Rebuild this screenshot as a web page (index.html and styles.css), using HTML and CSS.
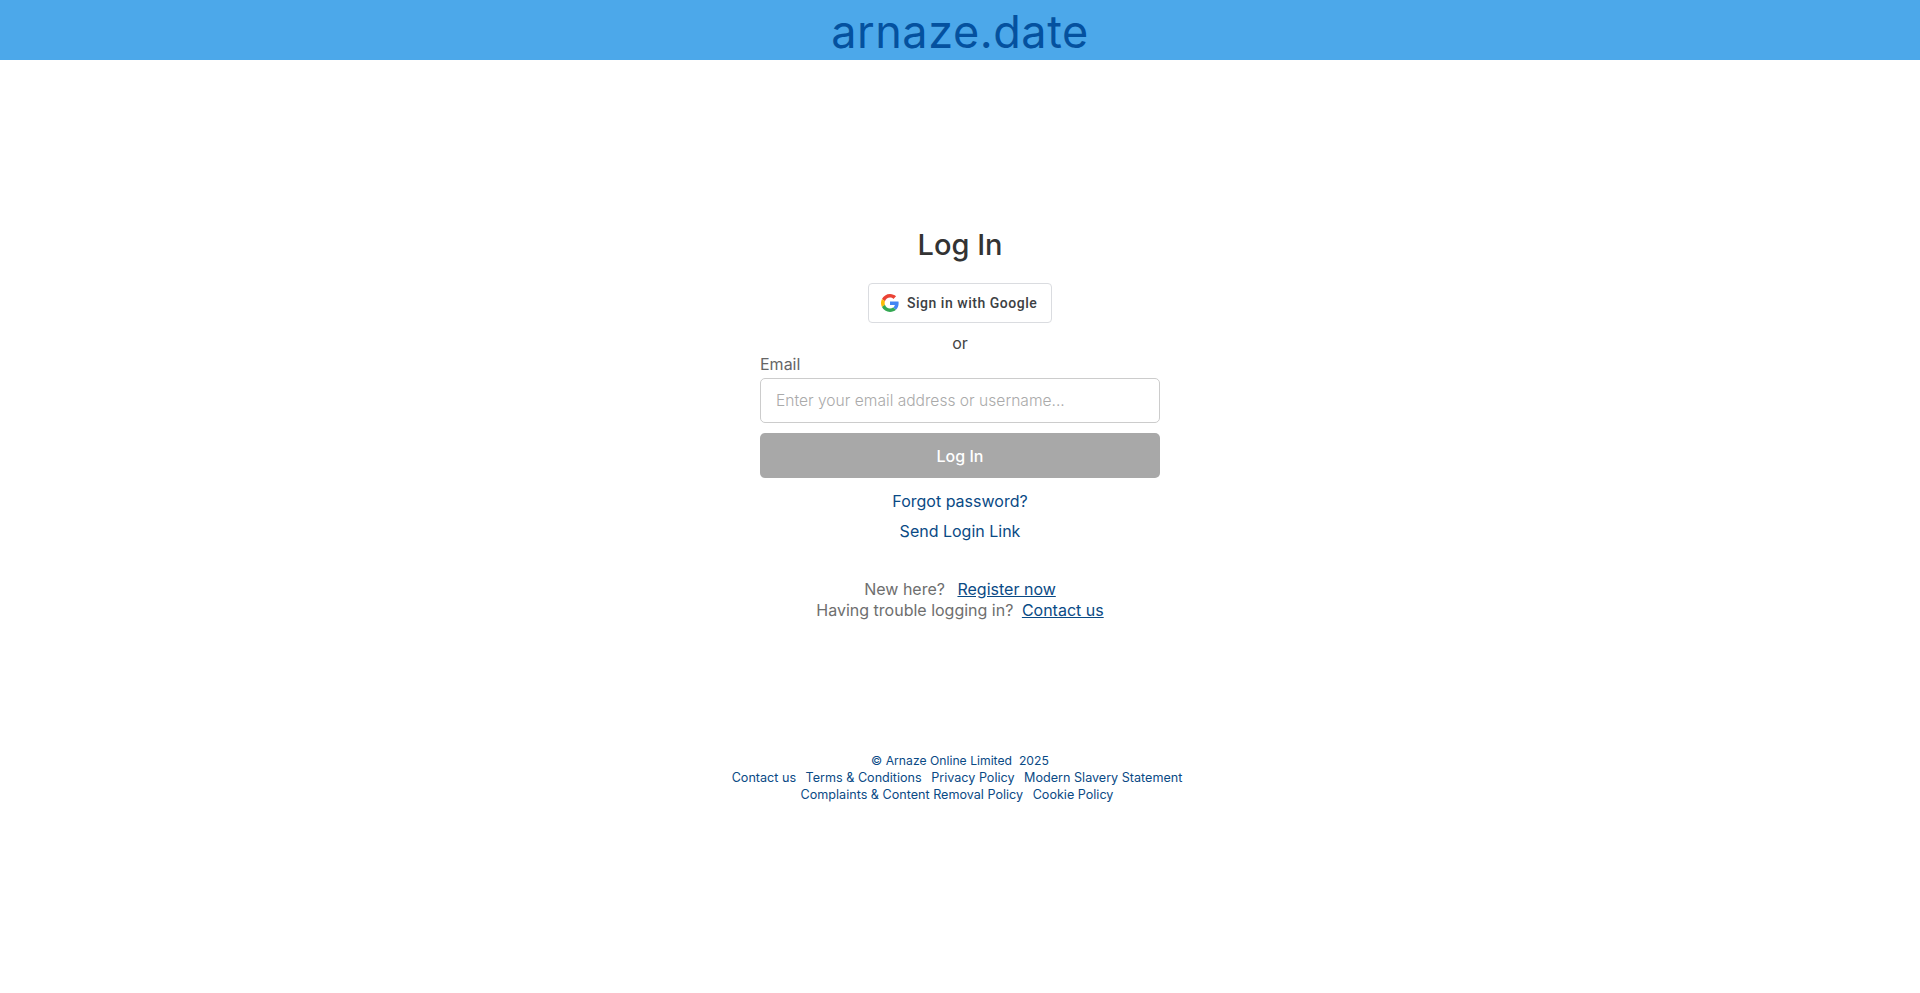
FILE: index.html
```html
<!DOCTYPE html>
<html lang="en">
<head>
    <meta charset="UTF-8">
    <meta name="viewport" content="width=device-width, initial-scale=1.0">
    <title>Log In - arnaze.date</title>
    <link rel="stylesheet" href="styles.css">
</head>
<body>

    <!-- Top banner -->
    <header class="banner">
        <a class="brand" href="#">arnaze.date</a>
    </header>

    <main class="login">
        <h1 class="login-title">Log In</h1>

        <button class="google-btn" type="button">
            <svg class="google-icon" viewBox="0 0 48 48" width="18" height="18">
                <path fill="#EA4335" d="M24 9.5c3.54 0 6.71 1.22 9.21 3.6l6.85-6.85C35.9 2.38 30.47 0 24 0 14.62 0 6.51 5.38 2.56 13.22l7.98 6.19C12.43 13.72 17.74 9.5 24 9.5z"/>
                <path fill="#4285F4" d="M46.98 24.55c0-1.57-.15-3.09-.38-4.55H24v9.02h12.94c-.58 2.96-2.26 5.48-4.78 7.18l7.73 6c4.51-4.18 7.09-10.36 7.09-17.65z"/>
                <path fill="#FBBC05" d="M10.53 28.59c-.48-1.45-.76-2.99-.76-4.59s.27-3.14.76-4.59l-7.98-6.19C.92 16.46 0 20.12 0 24c0 3.88.92 7.54 2.56 10.78l7.97-6.19z"/>
                <path fill="#34A853" d="M24 48c6.48 0 11.93-2.13 15.89-5.81l-7.73-6c-2.15 1.45-4.92 2.3-8.16 2.3-6.26 0-11.57-4.22-13.47-9.91l-7.98 6.19C6.51 42.62 14.62 48 24 48z"/>
            </svg>
            <span>Sign in with Google</span>
        </button>

        <p class="or">or</p>

        <form class="login-form">
            <label class="field-label" for="email">Email</label>
            <input class="field-input" type="text" id="email" placeholder="Enter your email address or username...">
            <button class="submit-btn" type="button">Log In</button>
        </form>

        <a class="login-link" href="#">Forgot password?</a>
        <a class="login-link" href="#">Send Login Link</a>

        <div class="login-help">
            <p>New here? <a class="help-link" href="#">Register now</a></p>
            <p>Having trouble logging in? <a class="help-link contact" href="#">Contact us</a></p>
        </div>
    </main>

    <footer class="site-footer">
        <p class="copyright">© Arnaze Online Limited &nbsp;2025</p>
        <p class="footer-links">
            <a href="#">Contact us</a>
            <a href="#">Terms &amp; Conditions</a>
            <a href="#">Privacy Policy</a>
            <a href="#">Modern Slavery Statement</a>
        </p>
        <p class="footer-links">
            <a href="#">Complaints &amp; Content Removal Policy</a>
            <a href="#">Cookie Policy</a>
        </p>
    </footer>

</body>
</html>
```
FILE: styles.css
```css
/* Page */
body {
    margin: 0;
    background-color: #fff;
    font-family: "Inter", "Open Sans", sans-serif;
    color: #666;
}

p {
    margin: 0;
}

a {
    text-decoration: none;
}

/* Banner */
.banner {
    height: 60px;
    background-color: #4ca8ea;
    text-align: center;
}

.brand {
    font-size: 45px;
    line-height: 64px;
    letter-spacing: 0.55px;
    color: #04519f;
}

/* Login column */
.login {
    width: 400px;
    margin: 0 auto;
    padding-top: 164px;
    display: flex;
    flex-direction: column;
    align-items: center;
}

.login-title {
    margin: 0 0 17px;
    font-size: 29px;
    line-height: 42px;
    font-weight: 500;
    color: #333;
}

.google-btn {
    width: 184px;
    height: 40px;
    padding: 0 12px;
    display: flex;
    align-items: center;
    gap: 8px;
    background: #fff;
    border: 1px solid #dadce0;
    border-radius: 4px;
    font-family: "Roboto", sans-serif;
    font-size: 14px;
    font-weight: 500;
    letter-spacing: 0.52px;
    color: #3c4043;
    white-space: nowrap;
}

.google-icon {
    flex: none;
}

.or {
    margin-top: 9px;
    font-size: 16px;
    line-height: 22px;
    color: #444;
}

.login-form {
    width: 100%;
    display: flex;
    flex-direction: column;
}

.field-label {
    font-size: 16px;
    line-height: 20px;
    margin-bottom: 4px;
    color: #666;
}

.field-input {
    box-sizing: border-box;
    height: 45px;
    padding: 0 15px;
    border: 1px solid #ccc;
    border-radius: 5px;
    font-family: inherit;
    font-size: 15.6px;
    font-weight: 300;
}

.field-input::placeholder {
    color: #aaa;
}

.submit-btn {
    height: 45px;
    margin-top: 10px;
    margin-bottom: 8px;
    background-color: #a8a8a8;
    border: none;
    border-radius: 5px;
    font-family: inherit;
    font-size: 16px;
    font-weight: 500;
    color: #fff;
}

.login-link {
    font-size: 16px;
    line-height: 30px;
    color: #0a4a85;
}

.login-help {
    margin-top: 33px;
    font-size: 16px;
    line-height: 21px;
    text-align: center;
    color: #6e6e6e;
}

.help-link {
    margin-left: 8px;
    color: #0a4a85;
    text-decoration: underline;
}

.help-link.contact {
    margin-left: 4px;
}

/* Footer */
.site-footer {
    margin-top: 131px;
    font-size: 12.6px;
    line-height: 17px;
    text-align: center;
    color: #0a4a85;
}

.copyright {
    font-size: 12.2px;
}

.footer-links a {
    margin-right: 6px;
    color: #0a4a85;
}
```
